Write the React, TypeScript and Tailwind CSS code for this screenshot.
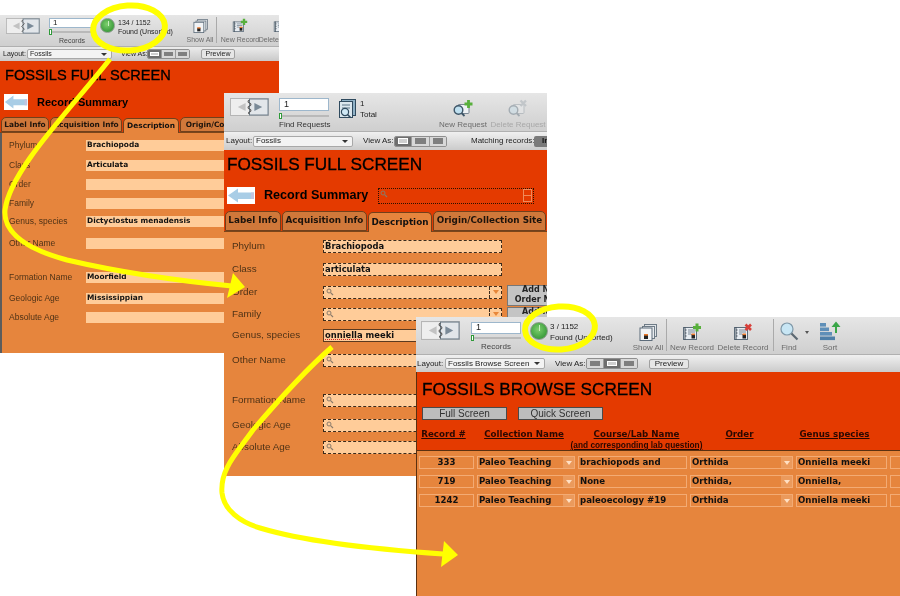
import React from "react";

const ui = "font-['Liberation_Sans',Arial,sans-serif]";
const bold = "font-['DejaVu_Sans',Verdana,sans-serif] font-bold";
const titleInk = "[-webkit-text-stroke:0.3px_black]";

function Book({ w, h, className = "" }: { w: number; h: number; className?: string }) {
  return (
    <svg width={w} height={h} viewBox="0 0 40 18" preserveAspectRatio="none" className={`shrink-0 ${className}`}>
      <rect x="0.5" y="0.5" width="39" height="17" fill="#eeeeee" stroke="#b5b5b5" />
      <rect x="20" y="1" width="19" height="16" fill="#e2e6ea" stroke="#6f7f8c" strokeWidth="1" />
      <path d="M16 5 L8 9 L16 13 Z" fill="#c2c2c2" />
      <path d="M25 5 L33 9 L25 13 Z" fill="#7a8a98" />
      <path d="M20 2 q-3 1.5 0 3 q3 1.5 0 3 q-3 1.5 0 3 q3 1.5 0 3 q-2 1 0 2" fill="none" stroke="#555" strokeWidth="1.1" />
    </svg>
  );
}

function Slider() {
  return (
    <div className="relative h-[4px] w-full">
      <div className="absolute left-[1px] right-0 top-[1px] h-[2px] bg-[#b9b9b9]" />
      <div className="absolute left-0 top-[-1px] h-[6px] w-[3px] border border-[#2f9a3a] bg-white" />
    </div>
  );
}

function Orb({ size }: { size: string }) {
  return (
    <div className={`relative shrink-0 rounded-full border border-[#8c9c8c] bg-[radial-gradient(circle_at_45%_40%,#7ed06e,#46a544_60%,#2f8a34)] ${size}`}>
      <div className="absolute left-1/2 top-[2px] h-[35%] w-px bg-[#c9f0c0]" />
    </div>
  );
}

function RecIcon({ badge, w = 20, h = 18 }: { badge?: "plus" | "x"; w?: number; h?: number }) {
  return (
    <svg width={w} height={h} viewBox="0 0 20 18">
      <rect x="1.5" y="4.5" width="13" height="12" fill="#e8edf2" stroke="#5d6c7a" />
      <path d="M3 4v13M3 7h1.5M3 10h1.5M3 13h1.5" stroke="#44505c" strokeWidth="1" />
      <path d="M6 7h7M6 9h7M6 11h3" stroke="#7c8a97" strokeWidth="1" />
      <rect x="9.5" y="11" width="3.5" height="4.5" fill="#222" />
      <rect x="9.5" y="10.5" width="3.5" height="1.6" fill="#e8772a" />
      {badge === "plus" && <path d="M15 0.5v8M11 4.5h8" stroke="#58b03c" strokeWidth="3" />}
      {badge === "x" && <path d="M12.5 1.5l5.5 5.5M18 1.5l-5.5 5.5" stroke="#d8403a" strokeWidth="2.6" />}
    </svg>
  );
}

function ShowAllIcon({ w = 18, h = 17 }: { w?: number; h?: number }) {
  return (
    <svg width={w} height={h} viewBox="0 0 18 17">
      <rect x="5.5" y="0.5" width="12" height="12" fill="#dfe3e7" stroke="#6e7b86" />
      <rect x="3.5" y="2.5" width="12" height="12" fill="#e8ebee" stroke="#6e7b86" />
      <rect x="1" y="4" width="12" height="12.5" fill="#f1f3f5" stroke="#5d6c7a" />
      <rect x="5" y="11" width="4" height="4" fill="#222" />
      <rect x="5" y="10" width="4" height="1.6" fill="#e8772a" />
    </svg>
  );
}

function ReqIcon({ badge, faded }: { badge: "plus" | "x"; faded?: boolean }) {
  return (
    <svg width="22" height="19" viewBox="0 0 22 19" className={faded ? "opacity-35" : ""}>
      <rect x="6" y="5.5" width="11" height="9" rx="1" fill="#eef1f4" stroke="#7b8894" />
      <circle cx="6.5" cy="11" r="4.3" fill="#bfe0f0" stroke="#3e5668" strokeWidth="1.4" />
      <path d="M9.5 14l3 3" stroke="#3e5668" strokeWidth="1.8" />
      {badge === "plus" ? (
        <path d="M16.5 1v8M12.5 5h8" stroke="#58b03c" strokeWidth="2.8" />
      ) : (
        <path d="M13.5 1.5l5.5 5.5M19 1.5l-5.5 5.5" stroke="#8c98a2" strokeWidth="2.4" />
      )}
    </svg>
  );
}

function FindIcon() {
  return (
    <svg width="20" height="20" viewBox="0 0 20 20">
      <circle cx="8" cy="8" r="6" fill="#c8e6f4" stroke="#7f98a8" strokeWidth="1.2" />
      <path d="M12.5 12.5l6 6" stroke="#5c6872" strokeWidth="2.2" />
    </svg>
  );
}

function SortIcon() {
  return (
    <svg width="24" height="20" viewBox="0 0 24 20">
      <rect x="2" y="2" width="6" height="3.6" fill="#5f8fb8" />
      <rect x="2" y="6.5" width="9" height="3.6" fill="#5f8fb8" />
      <rect x="2" y="11" width="12" height="3.6" fill="#5f8fb8" />
      <rect x="2" y="15.5" width="15" height="3.6" fill="#4f7fa8" />
      <path d="M17 12V6h-3.5L18 0.5 22.5 6H19v6z" fill="#3aa648" />
    </svg>
  );
}

function RequestsIcon() {
  return (
    <svg width="18" height="20" viewBox="0 0 18 20" className="shrink-0">
      <rect x="3.5" y="0.5" width="14" height="16" fill="#8fb1c6" stroke="#2f4a5e" />
      <rect x="1.5" y="2.5" width="13" height="16" fill="#dbe7ee" stroke="#2f4a5e" />
      <path d="M4 6h8M4 9h8" stroke="#5b7486" />
      <circle cx="7" cy="13" r="3.6" fill="#cfe8f5" stroke="#2f4a5e" strokeWidth="1.2" />
      <path d="M9.5 15.5l3 3" stroke="#2f4a5e" strokeWidth="1.6" />
    </svg>
  );
}

function ToolBtn({ label, width, textSize, children, dim = "text-[#6c6c6c]" }: { label: string; width: string; textSize: string; dim?: string; children: React.ReactNode }) {
  return (
    <div className={`flex h-full shrink-0 flex-col items-center justify-end pb-[1px] ${width}`}>
      <div className="mb-[2px] flex items-end justify-center">{children}</div>
      <div className={`whitespace-nowrap leading-[10px] ${textSize} ${dim}`}>{label}</div>
    </div>
  );
}

function SelectBox({ text, className }: { text: string; className: string }) {
  return (
    <div className={`flex shrink-0 items-center justify-between rounded-[2px] border border-[#a8a8a8] bg-[#f3f3f3] pl-[2px] pr-[4px] ${className}`}>
      <span className="whitespace-nowrap">{text}</span>
      <span className="h-0 w-0 border-x-[3px] border-t-[3px] border-x-transparent border-t-[#333]" />
    </div>
  );
}

function Seg({ active, className }: { active: 0 | 1; className: string }) {
  const cell = (on: boolean, kind: number) => (
    <div key={kind} className={`flex flex-1 items-center justify-center border-r border-[#9a9a9a] last:border-r-0 ${on ? "bg-[#6e6e6e]" : "bg-[#d8d8d8]"}`}>
      <div className={`h-[60%] w-[62%] ${on ? "border border-white bg-[#cfcfcf]" : "bg-[#7f7f7f]"}`} />
    </div>
  );
  return <div className={`flex shrink-0 overflow-hidden rounded-[2px] border border-[#8f8f8f] ${className}`}>{[0, 1, 2].map((i) => cell(i === active, i))}</div>;
}

function BackArrow({ className }: { className: string }) {
  return (
    <svg viewBox="0 0 28 17" preserveAspectRatio="none" className={`shrink-0 ${className}`}>
      <rect width="28" height="17" fill="#ffffff" />
      <path d="M1 8.5L11 1.5V5.5H27V12H11V15.5Z" fill="#a9cde6" />
      <rect x="24" y="5.5" width="3" height="6.5" fill="#c2c5e0" />
    </svg>
  );
}

function Tabs({ items, active, size, h }: { items: [string, string][]; active: number; size: string; h: string }) {
  return (
    <div className={`flex items-end gap-[1px] border-b border-[#7a451a] bg-[#e43a00] pl-[1px] ${h}`}>
      {items.map(([t, w], i) => (
        <div
          key={t}
          className={`flex h-full shrink-0 items-center justify-center whitespace-nowrap rounded-t-[5px] border border-[#70401c] ${w} ${size} ${bold} ${
            i === active ? "-mb-px border-b-0 bg-[#e6853d] text-[#111]" : "bg-[#d0783a] text-[#1c130c]"
          }`}
        >
          {t}
        </div>
      ))}
    </div>
  );
}

function Mag() {
  return (
    <svg width="8" height="8" viewBox="0 0 8 8" className="shrink-0">
      <circle cx="3" cy="3" r="2" fill="none" stroke="#8a7a6a" strokeWidth="1" />
      <path d="M4.6 4.6L7 7" stroke="#8a7a6a" strokeWidth="1.2" />
    </svg>
  );
}

function Tri({ color = "border-t-[#e8873a]" }: { color?: string }) {
  return <span className={`h-0 w-0 border-x-[3px] border-t-[4px] border-x-transparent ${color}`} />;
}

const rows1: [string, string, string][] = [
  ["Phylum", "Brachiopoda", "mt-[4px]"],
  ["Class", "Articulata", "mt-[4px]"],
  ["Order", "", "mt-[3px]"],
  ["Family", "", "mt-[3px]"],
  ["Genus, species", "Dictyclostus menadensis", "mt-[2px]"],
  ["Other Name", "", "mt-[6px]"],
  ["Formation Name", "Moorfield", "mt-[18px]"],
  ["Geologic Age", "Mississippian", "mt-[5px]"],
  ["Absolute Age", "", "mt-[3px]"],
];

function WindowOne() {
  return (
    <div className={`absolute left-0 top-[15px] h-[338px] w-[279px] overflow-hidden text-[#222] ${ui}`}>
      <div className="flex h-[31px] items-start bg-gradient-to-b from-[#e6e6e6] to-[#cfcfcf] text-[7px]">
        <Book w={34} h={16} className="ml-[6px] mt-[3px]" />
        <div className="ml-[9px] mt-[3px] flex w-[46px] shrink-0 flex-col">
          <div className="flex h-[10px] items-center border border-[#9db7cc] bg-white pl-[3px] text-[8px]">1</div>
          <div className="mt-[2px] h-[6px]"><Slider /></div>
          <div className="text-center leading-[10px] text-[#444]">Records</div>
        </div>
        <Orb size="ml-[5px] mt-[3px] size-[15px]" />
        <div className="ml-[3px] mt-[3px] w-[56px] shrink-0 whitespace-nowrap leading-[9px]">
          <div>134 / 1152</div>
          <div>Found (Unsorted)</div>
        </div>
        <div className="ml-[12px] h-full"><ToolBtn label="Show All" width="w-[28px]" textSize="text-[7px]"><ShowAllIcon w={15} h={14} /></ToolBtn></div>
        <div className="ml-[2px] mt-[2px] h-[26px] w-px shrink-0 bg-[#aaaaaa]" />
        <div className="ml-[3px] h-full"><ToolBtn label="New Record" width="w-[40px]" textSize="text-[7px]"><RecIcon badge="plus" w={16} h={15} /></ToolBtn></div>
        <div className="ml-[1px] h-full"><ToolBtn label="Delete Record" width="w-[40px]" textSize="text-[7px]"><RecIcon badge="x" w={16} h={15} /></ToolBtn></div>
      </div>
      <div className="flex h-[15px] items-center border-t border-[#b0b0b0] bg-gradient-to-b from-[#ececec] to-[#c9c9c9] text-[7px]">
        <span className="ml-[3px] w-[23px] shrink-0 whitespace-nowrap">Layout:</span>
        <SelectBox text="Fossils" className="ml-[1px] h-[10px] w-[85px]" />
        <span className="ml-[9px] w-[24px] shrink-0 whitespace-nowrap">View As:</span>
        <Seg active={0} className="ml-[2px] h-[10px] w-[43px]" />
        <div className="ml-[11px] flex h-[10px] w-[34px] shrink-0 items-center justify-center rounded-[2px] border border-[#a0a0a0] bg-[#e6e6e6]">Preview</div>
      </div>
      <div className="h-[56px] bg-[#e43a00] pl-[5px] text-black">
        <div className={`pt-[5px] text-[14.6px] leading-[18px] ${titleInk}`}>FOSSILS FULL SCREEN</div>
        <div className="mt-[10px] flex items-center">
          <BackArrow className="-ml-px h-[16px] w-[24px]" />
          <span className="ml-[9px] text-[11px] font-bold leading-[16px]">Record Summary</span>
        </div>
      </div>
      <Tabs
        h="h-[16px]"
        size="text-[7.4px]"
        active={2}
        items={[["Label Info", "w-[48px]"], ["Acquisition Info", "w-[72px]"], ["Description", "w-[56px]"], ["Origin/Collection Site", "w-[100px]"]]}
      />
      <div className="flex h-[220px] flex-col border-l-2 border-[#5c5c5c] bg-[#e6853d]">
        {rows1.map(([l, v, m]) => (
          <div key={l} className={`flex h-[16px] shrink-0 items-center ${m}`}>
            <span className="w-[84px] shrink-0 whitespace-nowrap pl-[7px] text-[8.5px] text-[#4e3216]">{l}</span>
            <div className={`flex h-[11px] flex-1 items-center bg-[#ffcc99] pl-[1px] text-[7.4px] text-[#111] ${bold}`}>{v}</div>
          </div>
        ))}
      </div>
    </div>
  );
}

const rows2: { l: string; v?: string; m: string; mag?: boolean; tri?: boolean; btn?: string; focus?: boolean }[] = [
  { l: "Phylum", v: "Brachiopoda", m: "mt-[6px]" },
  { l: "Class", v: "articulata", m: "mt-[7px]" },
  { l: "Order", m: "mt-[7px]", mag: true, tri: true, btn: "Add New\nOrder Name" },
  { l: "Family", m: "mt-[6px]", mag: true, tri: true, btn: "Add New\nFamily Name" },
  { l: "Genus, species", m: "mt-[5px]", focus: true },
  { l: "Other Name", m: "mt-[9px]", mag: true },
  { l: "Formation Name", m: "mt-[24px]", mag: true },
  { l: "Geologic Age", m: "mt-[9px]", mag: true },
  { l: "Absolute Age", m: "mt-[6px]", mag: true },
];

function WindowTwo() {
  return (
    <div className={`absolute left-[224px] top-[93px] h-[383px] w-[323px] overflow-hidden text-[#222] ${ui}`}>
      <div className="flex h-[38px] items-start bg-gradient-to-b from-[#e6e6e6] to-[#cfcfcf] text-[8px]">
        <Book w={39} h={18} className="ml-[6px] mt-[5px]" />
        <div className="ml-[10px] mt-[5px] flex w-[50px] shrink-0 flex-col">
          <div className="flex h-[13px] items-center border border-[#9db7cc] bg-white pl-[4px] text-[9px]">1</div>
          <div className="mt-[3px] h-[6px]"><Slider /></div>
          <div className="whitespace-nowrap text-center leading-[10px] text-[#333]">Find Requests</div>
        </div>
        <div className="ml-[9px] mt-[6px]"><RequestsIcon /></div>
        <div className="ml-[4px] mt-[5px] w-[30px] shrink-0 leading-[11px]">
          <div>1</div>
          <div>Total</div>
        </div>
        <div className="ml-[48px] h-full"><ToolBtn label="New Request" width="w-[50px]" textSize="text-[8px]"><ReqIcon badge="plus" /></ToolBtn></div>
        <div className="ml-[1px] h-full"><ToolBtn label="Delete Request" width="w-[58px]" textSize="text-[8px]" dim="text-[#a8a8a8]"><ReqIcon badge="x" faded /></ToolBtn></div>
      </div>
      <div className="flex h-[19px] items-center border-t border-[#b0b0b0] bg-gradient-to-b from-[#f0f0f0] to-[#cbcbcb] text-[8px]">
        <span className="ml-[2px] w-[25px] shrink-0">Layout:</span>
        <SelectBox text="Fossils" className="ml-[2px] h-[11px] w-[100px]" />
        <span className="ml-[10px] w-[29px] shrink-0 whitespace-nowrap">View As:</span>
        <Seg active={0} className="ml-[2px] h-[11px] w-[53px]" />
        <span className="ml-[24px] w-[61px] shrink-0 whitespace-nowrap">Matching records:</span>
        <div className="ml-[2px] flex h-[11px] w-[20px] shrink-0 items-center rounded-l-[2px] bg-[#7a7a7a] pl-[8px] font-bold text-[#111]">In</div>
      </div>
      <div className="h-[61px] bg-[#e43a00] pl-[3px] text-black">
        <div className={`pt-[4px] text-[17.2px] leading-[20px] ${titleInk}`}>FOSSILS FULL SCREEN</div>
        <div className="mt-[13px] flex h-[17px] items-center">
          <BackArrow className="h-[17px] w-[28px]" />
          <span className="ml-[9px] w-[114px] shrink-0 text-[12.6px] font-bold">Record Summary</span>
          <div className="flex h-[16px] w-[156px] shrink-0 items-center justify-between border border-dotted border-[#2a1000] pl-[1px]">
            <div className="self-start pt-[1px]"><Mag /></div>
            <div className="mr-[1px] flex h-[13px] w-[9px] flex-col border border-[#f08a5a]">
              <div className="h-1/2 border-b border-[#f08a5a]" />
            </div>
          </div>
        </div>
      </div>
      <Tabs
        h="h-[21px]"
        size="text-[8.8px]"
        active={2}
        items={[["Label Info", "w-[56px]"], ["Acquisition Info", "w-[85px]"], ["Description", "w-[64px]"], ["Origin/Collection Site", "w-[113px]"]]}
      />
      <div className="flex h-[244px] flex-col bg-[#e6853d]">
        {rows2.map((r) => (
          <div key={r.l} className={`flex h-[16px] shrink-0 items-center ${r.m}`}>
            <span className="w-[99px] shrink-0 whitespace-nowrap pl-[8px] text-[9.9px] text-[#4e3216]">{r.l}</span>
            <div
              className={`flex h-[13px] w-[179px] shrink-0 items-center justify-between bg-[#ffcc99] text-[8.4px] text-[#111] ${bold} ${
                r.focus ? "border border-[#5a3a20]" : "border border-dashed border-[#3a2a1c]"
              }`}
            >
              <span className="flex h-full items-start">
                {r.mag && <span className="pl-[2px] pt-[1px]"><Mag /></span>}
                {r.v && <span className="self-center pl-[1px] leading-none">{r.v}</span>}
                {r.focus && (
                  <span className="self-center whitespace-pre pl-[1px] leading-none">
                    <span className="underline decoration-[#d02020] decoration-dotted">onniella</span> meeki
                  </span>
                )}
              </span>
              {r.tri && (
                <span className="flex h-full w-[12px] items-center justify-center border-l border-dashed border-[#3a2a1c]">
                  <Tri />
                </span>
              )}
            </div>
            {r.btn && (
              <div className={`ml-[5px] flex h-[21px] w-[70px] shrink-0 translate-y-[3px] items-center justify-center whitespace-pre border border-[#777] bg-[#c4c4c4] text-center text-[8px] leading-[10px] text-[#222] ${bold}`}>
                {r.btn}
              </div>
            )}
          </div>
        ))}
      </div>
    </div>
  );
}

const table = [
  ["333", "Paleo Teaching", "brachiopods and", "Orthida", "Onniella meeki"],
  ["719", "Paleo Teaching", "None", "Orthida,", "Onniella,"],
  ["1242", "Paleo Teaching", "paleoecology #19", "Orthida", "Onniella meeki"],
];

function Cell({ text, width, arrow, center }: { text: string; width: string; arrow?: boolean; center?: boolean }) {
  return (
    <div className={`flex h-[13px] shrink-0 items-center border border-[#f3ab74] text-[8.6px] text-[#111] ${width} ${bold} ${center ? "justify-center" : "justify-between pl-[1px]"}`}>
      <span className="whitespace-nowrap">{text}</span>
      {arrow && (
        <span className="flex h-full w-[11px] items-center justify-center bg-[#eb9a5c]">
          <Tri color="border-t-[#ffe0c4]" />
        </span>
      )}
    </div>
  );
}

function HeadCell({ width, pad, children }: { width: string; pad: string; children: React.ReactNode }) {
  return <div className={`flex shrink-0 flex-col items-center whitespace-nowrap ${width} ${pad}`}>{children}</div>;
}

function WindowThree() {
  const h = `text-[8.7px] leading-[13px] underline ${bold} text-[#2a0800]`;
  return (
    <div className={`absolute left-[416px] top-[317px] h-[279px] w-[484px] overflow-hidden text-[#222] ${ui}`}>
      <div className="flex h-[37px] items-start bg-gradient-to-b from-[#e6e6e6] to-[#cfcfcf] text-[8px]">
        <Book w={39} h={19} className="ml-[5px] mt-[4px]" />
        <div className="ml-[11px] mt-[5px] flex w-[50px] shrink-0 flex-col">
          <div className="flex h-[12px] items-center border border-[#9db7cc] bg-white pl-[4px] text-[9px]">1</div>
          <div className="mt-[2px] h-[6px]"><Slider /></div>
          <div className="text-center leading-[10px] text-[#444]">Records</div>
        </div>
        <Orb size="ml-[9px] mt-[5px] size-[18px]" />
        <div className="ml-[2px] mt-[4px] w-[70px] shrink-0 whitespace-nowrap leading-[11px]">
          <div>3 / 1152</div>
          <div>Found (Unsorted)</div>
        </div>
        <div className="ml-[13px] h-full"><ToolBtn label="Show All" width="w-[30px]" textSize="text-[8px]"><ShowAllIcon /></ToolBtn></div>
        <div className="ml-[3px] mt-[2px] h-[32px] w-px shrink-0 bg-[#aaaaaa]" />
        <div className="ml-[2px] h-full"><ToolBtn label="New Record" width="w-[46px]" textSize="text-[8px]"><RecIcon badge="plus" /></ToolBtn></div>
        <div className="ml-[2px] h-full"><ToolBtn label="Delete Record" width="w-[52px]" textSize="text-[8px]"><RecIcon badge="x" /></ToolBtn></div>
        <div className="ml-[4px] mt-[2px] h-[32px] w-px shrink-0 bg-[#aaaaaa]" />
        <div className="ml-[3px] h-full"><ToolBtn label="Find" width="w-[24px]" textSize="text-[8px]"><FindIcon /></ToolBtn></div>
        <span className="ml-[4px] mt-[14px] h-0 w-0 shrink-0 border-x-[2px] border-t-[3px] border-x-transparent border-t-[#555]" />
        <div className="ml-[9px] h-full"><ToolBtn label="Sort" width="w-[24px]" textSize="text-[8px]"><SortIcon /></ToolBtn></div>
      </div>
      <div className="flex h-[18px] items-center border-t border-[#b0b0b0] bg-gradient-to-b from-[#f0f0f0] to-[#cbcbcb] text-[8px]">
        <span className="ml-[1px] w-[25px] shrink-0">Layout:</span>
        <SelectBox text="Fossils Browse Screen" className="ml-[3px] h-[11px] w-[100px]" />
        <span className="ml-[10px] w-[29px] shrink-0 whitespace-nowrap">View As:</span>
        <Seg active={1} className="ml-[2px] h-[11px] w-[52px]" />
        <div className="ml-[11px] flex h-[10px] w-[40px] shrink-0 items-center justify-center rounded-[2px] border border-[#a0a0a0] bg-[#e6e6e6]">Preview</div>
      </div>
      <div className="h-[79px] border-b border-l border-[#5a3010] bg-[#e43a00] text-black">
        <div className={`pl-[5px] pt-[7px] text-[17.2px] leading-[20px] ${titleInk}`}>FOSSILS BROWSE SCREEN</div>
        <div className="ml-[5px] mt-[8px] flex gap-[11px] text-[10px]">
          <div className="flex h-[13px] w-[85px] items-center justify-center border border-[#4a4a4a] bg-[#bdbdbd] text-[#333]">Full Screen</div>
          <div className="flex h-[13px] w-[85px] items-center justify-center border border-[#4a4a4a] bg-[#bdbdbd] text-[#333]">Quick Screen</div>
        </div>
        <div className="mt-[8px] flex gap-[3px] pl-[2px]">
          <HeadCell width="w-[55px]" pad="pr-[6px]"><span className={h}>Record #</span></HeadCell>
          <HeadCell width="w-[98px]" pad="pr-[4px]"><span className={h}>Collection Name</span></HeadCell>
          <HeadCell width="w-[109px]" pad="pl-[8px]">
            <span className={h}>Course/Lab Name</span>
            <span className="text-[8.3px] font-bold leading-[9px] text-[#2a0800] underline">(and corresponding lab question)</span>
          </HeadCell>
          <HeadCell width="w-[103px]" pad="pr-[4px]"><span className={h}>Order</span></HeadCell>
          <HeadCell width="w-[91px]" pad="pr-[14px]"><span className={h}>Genus species</span></HeadCell>
        </div>
      </div>
      <div className="h-[145px] border-l border-[#5a3010] bg-[#e6853d] pt-[5px]">
        <div className="flex flex-col gap-[6px] pl-[2px]">
          {table.map((r) => (
            <div key={r[0]} className="flex gap-[3px]">
              <Cell text={r[0]} width="w-[55px]" center />
              <Cell text={r[1]} width="w-[98px]" arrow />
              <Cell text={r[2]} width="w-[109px]" />
              <Cell text={r[3]} width="w-[103px]" arrow />
              <Cell text={r[4]} width="w-[91px]" />
              <Cell text="" width="w-[40px]" />
            </div>
          ))}
        </div>
      </div>
    </div>
  );
}

function Annotations() {
  return (
    <svg className="absolute left-0 top-0" width="900" height="596" viewBox="0 0 900 596" fill="none">
      <g stroke="#ffff00">
        <ellipse cx="129" cy="28" rx="36" ry="22.5" strokeWidth="6" transform="rotate(-4 129 28)" />
        <ellipse cx="560" cy="328" rx="35" ry="21.5" strokeWidth="6" transform="rotate(-4 560 328)" />
        <path d="M110 59 C70 110 10 170 5 210 C3 235 30 250 67 260 C110 270 170 280 232 286" strokeWidth="5" />
        <path d="M332 347 C300 375 270 410 253 430 C235 455 220 470 222 493 C224 510 240 522 260 528 C300 540 370 549 443 554" strokeWidth="5" />
      </g>
      <path d="M245 287L233 273L227 298Z" fill="#ffff00" />
      <path d="M458 555L444 541L441 567Z" fill="#ffff00" />
    </svg>
  );
}

export default function App() {
  return (
    <div className="relative h-[596px] w-[900px] overflow-hidden bg-white blur-[0.35px]">
      <WindowOne />
      <WindowTwo />
      <WindowThree />
      <Annotations />
    </div>
  );
}
